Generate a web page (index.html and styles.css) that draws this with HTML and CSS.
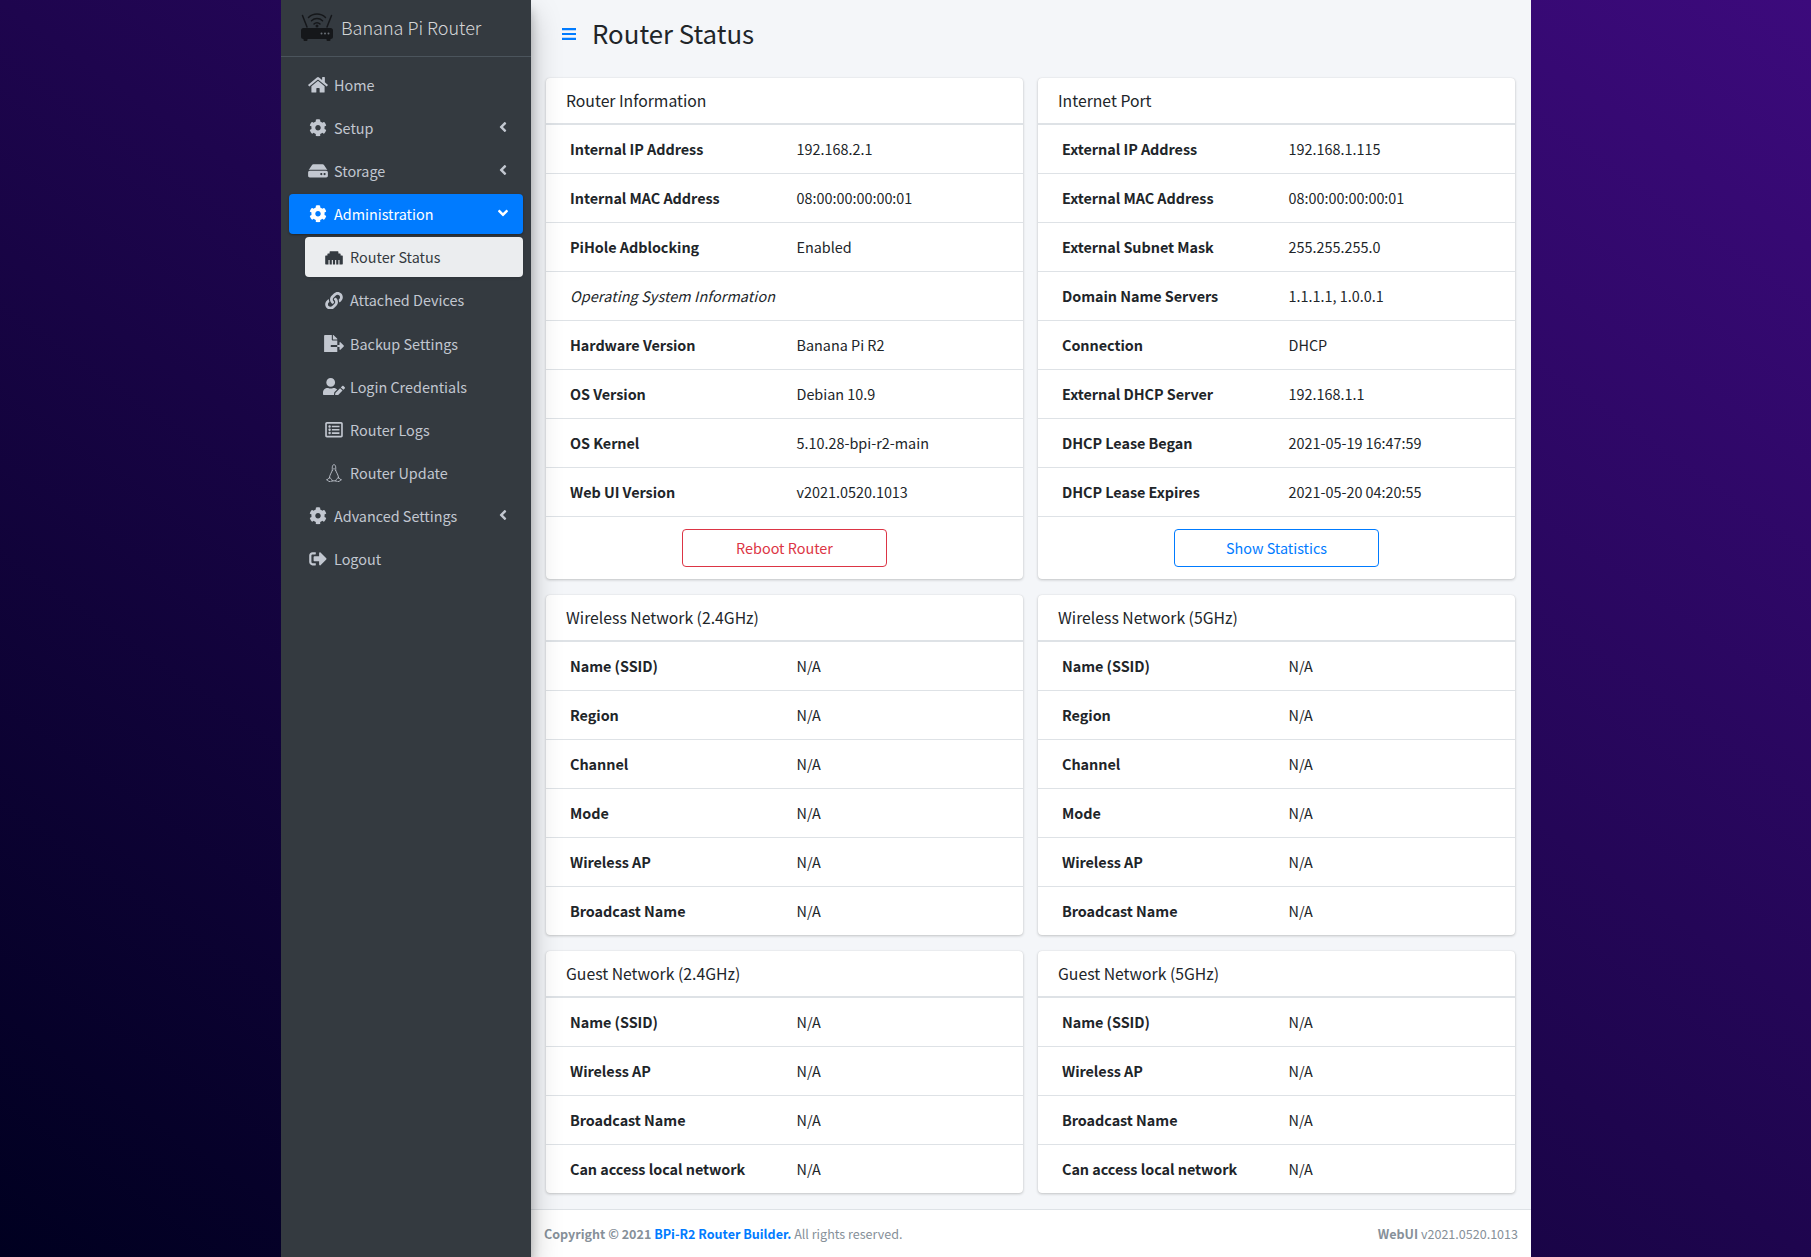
FILE: index.html
```html
<!DOCTYPE html>
<html lang="en">
<head>
<meta charset="utf-8">
<title>Router Status</title>
<link rel="stylesheet" href="styles.css">
</head>
<body>
<svg class="defs" width="0" height="0" aria-hidden="true">
  <defs>
    <symbol id="i-cog" viewBox="0 0 512 512"><path d="M487.4 315.7l-42.6-24.6c4.3-23.2 4.3-47 0-70.2l42.6-24.6c4.900-2.800 7.100-8.600 5.500-14-11.100-35.600-30-67.800-54.700-94.600-3.800-4.100-10-5.100-14.800-2.300L380.800 110c-17.900-15.400-38.500-27.300-60.800-35.100V25.800c0-5.600-3.900-10.500-9.400-11.700-36.700-8.200-74.300-7.800-109.200 0-5.500 1.200-9.400 6.100-9.400 11.700V75c-22.200 7.900-42.800 19.800-60.800 35.100L88.700 85.500c-4.900-2.800-11-1.900-14.800 2.300-24.700 26.700-43.600 58.900-54.700 94.600-1.700 5.400.6 11.200 5.500 14L67.300 221c-4.300 23.200-4.300 47 0 70.200l-42.600 24.600c-4.900 2.800-7.100 8.600-5.500 14 11.100 35.600 30 67.800 54.700 94.600 3.800 4.100 10 5.100 14.800 2.300l42.600-24.600c17.900 15.400 38.500 27.300 60.800 35.100v49.200c0 5.600 3.900 10.500 9.400 11.700 36.700 8.200 74.300 7.800 109.200 0 5.500-1.200 9.400-6.100 9.400-11.700v-49.200c22.200-7.900 42.800-19.800 60.800-35.100l42.600 24.600c4.900 2.800 11 1.900 14.800-2.300 24.700-26.700 43.600-58.900 54.700-94.600 1.500-5.500-.7-11.300-5.600-14.100zM256 336c-44.100 0-80-35.900-80-80s35.900-80 80-80 80 35.900 80 80-35.900 80-80 80z"/></symbol>
    <symbol id="i-left" viewBox="0 0 256 512"><path d="M31.700 239l136-136c9.400-9.400 24.600-9.400 33.900 0l22.600 22.600c9.400 9.400 9.400 24.600 0 33.900L127.900 256l96.400 96.400c9.400 9.400 9.400 24.600 0 33.900L201.700 409c-9.400 9.400-24.600 9.400-33.900 0l-136-136c-9.500-9.400-9.500-24.600-.1-34z"/></symbol>
    <symbol id="i-down" viewBox="0 0 320 512"><path d="M143 352.300L7 216.300c-9.400-9.400-9.400-24.600 0-33.900l22.600-22.600c9.400-9.400 24.600-9.400 33.900 0l96.400 96.400 96.400-96.400c9.400-9.400 24.600-9.400 33.900 0l22.600 22.600c9.400 9.400 9.400 24.600 0 33.900l-136 136c-9.200 9.400-24.400 9.400-33.800 0z"/></symbol>
  </defs>
</svg>
<div class="wrapper">
  <aside class="sidebar">
    <div class="brand">
      <svg class="brand-logo" viewBox="0 0 32 29"><g fill="none" stroke="#15171a" stroke-linecap="round" stroke-width="1.5"><path d="M7.500 5.500a12 12 0 0 1 17 0"/><path d="M10.500 8.800a8 8 0 0 1 11 0"/><path d="M13 12a4 4 0 0 1 6 0"/><path d="M1.500 3.500l4.500 11.500M30.500 3.500l-4.500 11.500"/></g><circle cx="16" cy="14" r="1.500" fill="#15171a"/><rect x="0" y="16" width="32" height="11" rx="2.500" fill="#15171a"/><rect x="2.500" y="26" width="4" height="3" rx="1" fill="#15171a"/><rect x="25.500" y="26" width="4" height="3" rx="1" fill="#15171a"/><g fill="#6a6f76"><circle cx="20.500" cy="21.500" r="1"/><circle cx="24" cy="21.500" r="1"/><circle cx="27.500" cy="21.500" r="1"/></g></svg>
      <span class="brand-text">Banana Pi Router</span>
    </div>
    <nav class="nav">
      <a class="nav-link"><svg class="ico" viewBox="0 0 576 512"><path d="M280.400 148.300L96 300.100V464a16 16 0 0 0 16 16l112.100-.3a16 16 0 0 0 15.900-16V368a16 16 0 0 1 16-16h64a16 16 0 0 1 16 16v95.600a16 16 0 0 0 16 16.100L464 480a16 16 0 0 0 16-16V300L295.700 148.300a12.200 12.200 0 0 0-15.300 0zM571.600 251.500L488 182.600V44.100a12 12 0 0 0-12-12h-56a12 12 0 0 0-12 12v72.600L318.500 43a48 48 0 0 0-61 0L4.300 251.500a12 12 0 0 0-1.600 16.900l25.500 31A12 12 0 0 0 45.200 301l235.200-193.700a12.200 12.200 0 0 1 15.300 0L530.900 301a12 12 0 0 0 16.900-1.600l25.500-31a12 12 0 0 0-1.700-16.900z"/></svg><span>Home</span></a>
      <a class="nav-link"><svg class="ico"><use href="#i-cog"/></svg><span>Setup</span><svg class="chev"><use href="#i-left"/></svg></a>
      <a class="nav-link"><svg class="ico" viewBox="0 0 576 512"><path d="M576 304v96c0 26.510-21.490 48-48 48H48c-26.510 0-48-21.490-48-48v-96c0-26.510 21.490-48 48-48h480c26.510 0 48 21.490 48 48zm-48-80a79.557 79.557 0 0 1 30.777 6.165L462.250 85.374A48.003 48.003 0 0 0 422.311 64H153.689a48 48 0 0 0-39.938 21.374L17.223 230.165A79.557 79.557 0 0 1 48 224h480zm-48 96c-17.673 0-32 14.327-32 32s14.327 32 32 32 32-14.327 32-32-14.327-32-32-32zm-96 0c-17.673 0-32 14.327-32 32s14.327 32 32 32 32-14.327 32-32-14.327-32-32-32z"/></svg><span>Storage</span><svg class="chev"><use href="#i-left"/></svg></a>
      <a class="nav-link is-active"><svg class="ico"><use href="#i-cog"/></svg><span>Administration</span><svg class="chev"><use href="#i-down"/></svg></a>
      <div class="subnav">
        <a class="sub-link is-current"><svg class="ico" viewBox="0 0 512 512"><path d="M496 192h-48v-48c0-8.800-7.200-16-16-16h-48V80c0-8.800-7.200-16-16-16H144c-8.800 0-16 7.200-16 16v48H80c-8.800 0-16 7.200-16 16v48H16c-8.800 0-16 7.200-16 16v224c0 8.800 7.200 16 16 16h80V320h32v128h64V320h32v128h64V320h32v128h64V320h32v128h80c8.800 0 16-7.200 16-16V208c0-8.800-7.200-16-16-16z"/></svg><span>Router Status</span></a>
        <a class="sub-link"><svg class="ico" viewBox="0 0 512 512"><path d="M326.600 185.400c59.700 59.800 58.900 155.700.4 214.600l-.4.4-67.200 67.200c-59.300 59.300-155.700 59.300-215 0-59.300-59.300-59.300-155.700 0-215l37.100-37.100c9.800-9.800 26.800-3.300 27.300 10.600.6 17.700 3.800 35.500 9.700 52.700 2 5.800.6 12.300-3.800 16.600l-13.100 13.100c-28 28-28.900 73.700-1.200 102 28 28.500 74 28.700 102.200.5l67.200-67.200c28.200-28.200 28.100-73.800 0-101.800-3.700-3.700-7.400-6.600-10.300-8.600a16 16 0 0 1-7-12.600c-.4-10.600 3.300-21.500 11.700-29.800l21.100-21.100c5.500-5.500 14.200-6.200 20.600-1.700a152.500 152.500 0 0 1 20.500 17.200zM467.500 44.400c-59.300-59.300-155.700-59.300-215 0l-67.200 67.200-.4.4c-58.600 58.900-59.400 154.800.4 214.600a152.500 152.500 0 0 0 20.500 17.200c6.400 4.500 15.100 3.800 20.600-1.700l21.100-21.100c8.400-8.400 12.100-19.200 11.700-29.800a16 16 0 0 0-7-12.600c-2.900-2-6.600-4.900-10.300-8.600-28.100-28-28.200-73.600 0-101.800l67.200-67.200c28.200-28.200 74.200-28 102.200.5 27.700 28.300 26.800 74-1.200 102l-13.100 13.100c-4.400 4.400-5.800 10.800-3.800 16.600 5.900 17.200 9.100 35 9.700 52.700.5 13.900 17.500 20.400 27.300 10.600l37.100-37.100c59.300-59.300 59.300-155.700 0-215z"/></svg><span>Attached Devices</span></a>
        <a class="sub-link"><svg class="ico" viewBox="0 0 576 512"><path d="M384 121.900c0-6.300-2.500-12.400-7-16.900L279.100 7c-4.500-4.500-10.600-7-17-7H256v128h128zM571 308l-95.700-96.400c-10.100-10.100-27.400-3-27.400 11.300V288h-64v64h64v65.200c0 14.300 17.300 21.400 27.400 11.300L571 332c6.600-6.600 6.600-17.400 0-24zm-379 28v-32c0-8.800 7.200-16 16-16h176V160H248c-13.200 0-24-10.800-24-24V0H24C10.700 0 0 10.700 0 24v464c0 13.300 10.700 24 24 24h336c13.300 0 24-10.700 24-24V352H208c-8.800 0-16-7.200-16-16z"/></svg><span>Backup Settings</span></a>
        <a class="sub-link"><svg class="ico" viewBox="0 0 640 512"><path d="M224 256c70.700 0 128-57.300 128-128S294.700 0 224 0 96 57.300 96 128s57.300 128 128 128zm89.600 32h-16.700a174 174 0 0 1-145.800 0h-16.700C60.200 288 0 348.200 0 422.400V464c0 26.500 21.500 48 48 48h274.900c-2.400-6.800-3.400-14-2.600-21.300l6.800-60.900 1.200-11.100 7.900-7.900 77.300-77.300c-24.500-27.700-60-45.500-100-45.500zm45.300 145.300l-6.800 61c-1.100 10.200 7.500 18.800 17.600 17.600l60.900-6.800 137.900-137.900-71.700-71.700-137.900 137.800zM633 268.900L595.100 231c-9.300-9.300-24.500-9.300-33.800 0l-37.800 37.800-4.100 4.100 71.800 71.700 41.800-41.800c9.300-9.400 9.300-24.500 0-33.900z"/></svg><span>Login Credentials</span></a>
        <a class="sub-link"><svg class="ico" viewBox="0 0 512 512"><path d="M464 32H48C21.500 32 0 53.500 0 80v352c0 26.500 21.500 48 48 48h416c26.500 0 48-21.500 48-48V80c0-26.500-21.500-48-48-48zm-6 400H54a6 6 0 0 1-6-6V86a6 6 0 0 1 6-6h404a6 6 0 0 1 6 6v340a6 6 0 0 1-6 6zm-42-92v24c0 6.600-5.400 12-12 12H204c-6.600 0-12-5.400-12-12v-24c0-6.600 5.400-12 12-12h200c6.600 0 12 5.400 12 12zm0-96v24c0 6.600-5.400 12-12 12H204c-6.600 0-12-5.400-12-12v-24c0-6.600 5.400-12 12-12h200c6.600 0 12 5.400 12 12zm0-96v24c0 6.600-5.400 12-12 12H204c-6.600 0-12-5.400-12-12v-24c0-6.600 5.400-12 12-12h200c6.600 0 12 5.400 12 12zm-252 12c0 19.900-16.100 36-36 36s-36-16.100-36-36 16.100-36 36-36 36 16.100 36 36zm0 96c0 19.900-16.100 36-36 36s-36-16.100-36-36 16.100-36 36-36 36 16.100 36 36zm0 96c0 19.900-16.100 36-36 36s-36-16.100-36-36 16.100-36 36-36 36 16.100 36 36z"/></svg><span>Router Logs</span></a>
        <a class="sub-link"><svg class="ico ico-tall" viewBox="0 0 16 19"><g class="tux" fill="none" stroke="currentColor" stroke-width=".9" stroke-linejoin="round" stroke-linecap="round"><path d="M6.300 6.500C6 3 6.300.7 8 .7s2 2.300 1.700 5.800"/><path d="M6.300 6.500C5.400 9 3.600 11 3.200 14.500M9.700 6.500c.9 2.500 2.700 4.500 3.100 8"/><path d="M.8 16.300c1.400-.4 1.300-2.200 2.600-2.200 1 0 2 1.300 2.700 3 .4 1.100-1 1.500-2 1.200-1.300-.3-2.400-1.100-3.300-2zM15.200 16.300c-1.400-.4-1.300-2.200-2.600-2.200-1 0-2 1.300-2.700 3-.4 1.100 1 1.500 2 1.200 1.300-.3 2.400-1.100 3.300-2z"/><path d="M6.200 17.300h3.600"/></g><path d="M6.800 4.500h2.400L8 5.800z" fill="currentColor"/></svg><span>Router Update</span></a>
      </div>
      <a class="nav-link"><svg class="ico"><use href="#i-cog"/></svg><span>Advanced Settings</span><svg class="chev"><use href="#i-left"/></svg></a>
      <a class="nav-link"><svg class="ico" viewBox="0 0 512 512"><path d="M497 273L329 441c-15 15-41 4.500-41-17v-96H152c-13.300 0-24-10.700-24-24v-96c0-13.300 10.700-24 24-24h136V88c0-21.400 25.900-32 41-17l168 168c9.300 9.400 9.300 24.600 0 34zM192 436v-40c0-6.600-5.400-12-12-12H96c-17.700 0-32-14.300-32-32V160c0-17.700 14.300-32 32-32h84c6.600 0 12-5.400 12-12V76c0-6.600-5.400-12-12-12H96c-53 0-96 43-96 96v192c0 53 43 96 96 96h84c6.600 0 12-5.400 12-12z"/></svg><span>Logout</span></a>
    </nav>
  </aside>
  <div class="main">
    <header class="page-head">
      <svg class="burger" viewBox="0 0 14 12"><path d="M0 0h14v2.200H0zM0 4.900h14v2.200H0zM0 9.800h14V12H0z"/></svg>
      <h1>Router Status</h1>
    </header>
    <section class="cards">
      <article class="card">
        <h2 class="card-title">Router Information</h2>
        <div class="row"><b>Internal IP Address</b><span>192.168.2.1</span></div>
        <div class="row"><b>Internal MAC Address</b><span>08:00:00:00:00:01</span></div>
        <div class="row"><b>PiHole Adblocking</b><span>Enabled</span></div>
        <div class="row"><i>Operating System Information</i></div>
        <div class="row"><b>Hardware Version</b><span>Banana Pi R2</span></div>
        <div class="row"><b>OS Version</b><span>Debian 10.9</span></div>
        <div class="row"><b>OS Kernel</b><span>5.10.28-bpi-r2-main</span></div>
        <div class="row"><b>Web UI Version</b><span>v2021.0520.1013</span></div>
        <div class="card-foot"><a class="btn btn-red">Reboot Router</a></div>
      </article>
      <article class="card">
        <h2 class="card-title">Internet Port</h2>
        <div class="row"><b>External IP Address</b><span>192.168.1.115</span></div>
        <div class="row"><b>External MAC Address</b><span>08:00:00:00:00:01</span></div>
        <div class="row"><b>External Subnet Mask</b><span>255.255.255.0</span></div>
        <div class="row"><b>Domain Name Servers</b><span>1.1.1.1, 1.0.0.1</span></div>
        <div class="row"><b>Connection</b><span>DHCP</span></div>
        <div class="row"><b>External DHCP Server</b><span>192.168.1.1</span></div>
        <div class="row"><b>DHCP Lease Began</b><span>2021-05-19 16:47:59</span></div>
        <div class="row"><b>DHCP Lease Expires</b><span>2021-05-20 04:20:55</span></div>
        <div class="card-foot"><a class="btn btn-blue">Show Statistics</a></div>
      </article>
      <article class="card">
        <h2 class="card-title">Wireless Network (2.4GHz)</h2>
        <div class="row"><b>Name (SSID)</b><span>N/A</span></div>
        <div class="row"><b>Region</b><span>N/A</span></div>
        <div class="row"><b>Channel</b><span>N/A</span></div>
        <div class="row"><b>Mode</b><span>N/A</span></div>
        <div class="row"><b>Wireless AP</b><span>N/A</span></div>
        <div class="row"><b>Broadcast Name</b><span>N/A</span></div>
      </article>
      <article class="card">
        <h2 class="card-title">Wireless Network (5GHz)</h2>
        <div class="row"><b>Name (SSID)</b><span>N/A</span></div>
        <div class="row"><b>Region</b><span>N/A</span></div>
        <div class="row"><b>Channel</b><span>N/A</span></div>
        <div class="row"><b>Mode</b><span>N/A</span></div>
        <div class="row"><b>Wireless AP</b><span>N/A</span></div>
        <div class="row"><b>Broadcast Name</b><span>N/A</span></div>
      </article>
      <article class="card">
        <h2 class="card-title">Guest Network (2.4GHz)</h2>
        <div class="row"><b>Name (SSID)</b><span>N/A</span></div>
        <div class="row"><b>Wireless AP</b><span>N/A</span></div>
        <div class="row"><b>Broadcast Name</b><span>N/A</span></div>
        <div class="row"><b>Can access local network</b><span>N/A</span></div>
      </article>
      <article class="card">
        <h2 class="card-title">Guest Network (5GHz)</h2>
        <div class="row"><b>Name (SSID)</b><span>N/A</span></div>
        <div class="row"><b>Wireless AP</b><span>N/A</span></div>
        <div class="row"><b>Broadcast Name</b><span>N/A</span></div>
        <div class="row"><b>Can access local network</b><span>N/A</span></div>
      </article>
    </section>
    <footer class="foot">
      <div><b>Copyright © 2021 <a class="foot-link">BPi-R2 Router Builder.</a></b> All rights reserved.</div>
      <div><b>WebUI</b> v2021.0520.1013</div>
    </footer>
  </div>
</div>
</body>
</html>
```
FILE: styles.css
```css
* { box-sizing: border-box; }
html, body { height: 100%; }
body {
  margin: 0;
  font-family: "Noto Sans CJK SC", "Liberation Sans", sans-serif;
  font-size: 14.4px;
  line-height: 24px;
  color: #212529;
  background: linear-gradient(to top right, #000020, #3c0a7c);
}
.defs { position: absolute; }
.wrapper { display: flex; width: 1250px; height: 100vh; margin-left: 281px; overflow: hidden; }

.sidebar { width: 250px; flex: none; background: #343a40; color: #c2c7d0; box-shadow: 0 14px 28px rgba(0,0,0,.25), 0 10px 10px rgba(0,0,0,.22); z-index: 2; }
.brand { display: flex; align-items: center; height: 57px; padding: 0 0 3px 20px; border-bottom: 1px solid #4b545c; }
.brand-logo { width: 32px; height: 29px; margin-right: 8px; flex: none; }
.brand-text { font-size: 18px; font-weight: 300; color: rgba(255,255,255,.8); }
.nav { display: flex; flex-direction: column; gap: 3.1px; padding: 8px 8px 0; }
.nav-link, .sub-link { display: flex; align-items: center; height: 40px; padding: 0 16px 0 18px; border-radius: 4px; }
.ico { width: 22px; height: 17.6px; margin-right: 5px; fill: currentColor; flex: none; }
.ico-tall { height: 18.5px; }
.chev { width: 10px; height: 16px; margin: 0 -1px 2px auto; fill: currentColor; flex: none; }
.is-active { background: #007bff; color: #fff; box-shadow: 0 1px 3px rgba(0,0,0,.12), 0 1px 2px rgba(0,0,0,.24); }
.subnav { display: flex; flex-direction: column; gap: 3.1px; padding-left: 16px; }
.is-current { background: #ebedef; color: #343a40; box-shadow: 0 1px 3px rgba(0,0,0,.12); }

.main { flex: 1; display: flex; flex-direction: column; min-width: 0; background: #f4f6f9; }
.page-head { display: flex; align-items: center; height: 68px; margin-bottom: 10px; padding-left: 31px; flex: none; }
.burger { width: 14px; height: 12px; margin-right: 16px; fill: #007bff; }
h1 { margin: 0 0 3px; font-size: 25.8px; font-weight: 400; line-height: 32px; }
.cards { display: grid; grid-template-columns: 1fr 1fr; gap: 16px 15px; padding: 0 16px 0 15px; align-items: start; }
.card { background: #fff; border-radius: 4px; box-shadow: 0 0 1px rgba(0,0,0,.125), 0 1px 3px rgba(0,0,0,.2); }
.card-title { margin: 0; height: 47px; padding: 0 20px; font-size: 15.75px; font-weight: 400; line-height: 45px; border-bottom: 2px solid #dee2e6; }
.row { display: flex; align-items: center; height: 49px; padding-left: 24px; border-bottom: 1px solid #dee2e6; }
.row:last-child { border-bottom: 0; height: 48px; }
.row b { width: 226.5px; flex: none; font-weight: 700; letter-spacing: -.04px; }
.row i { letter-spacing: .1px; }
.card-foot { display: flex; justify-content: center; align-items: center; height: 62px; }
.btn { display: flex; align-items: center; justify-content: center; width: 205px; height: 38px; border: 1px solid; border-radius: 4px; background: #fff; }
.btn-red { color: #dc3545; border-color: #dc3545; }
.btn-blue { color: #007bff; border-color: #007bff; }
.foot { display: flex; justify-content: space-between; align-items: center; height: 48px; margin-top: auto; padding: 0 13px; background: #fff; border-top: 1px solid #dee2e6; font-size: 12.55px; color: #869099; }
.foot-link { color: #007bff; }
```
